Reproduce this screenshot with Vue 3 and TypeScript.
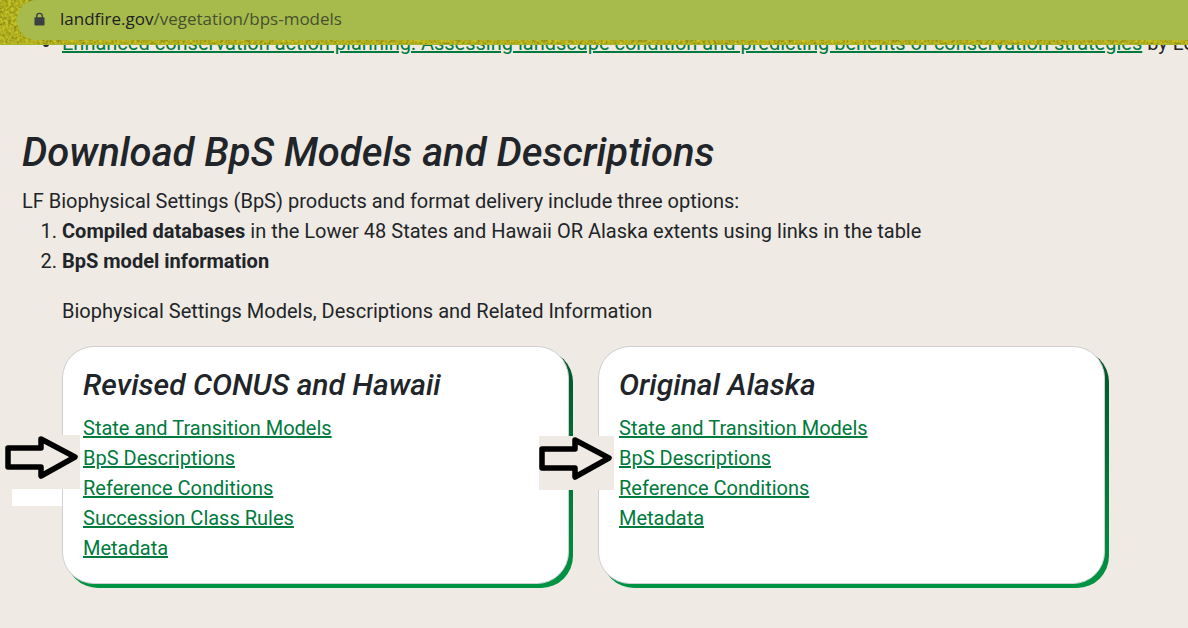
<script setup lang="ts">
interface Card {
  title: string
  links: string[]
}

const cards: Card[] = [
  {
    title: 'Revised CONUS and Hawaii',
    links: [
      'State and Transition Models',
      'BpS Descriptions',
      'Reference Conditions',
      'Succession Class Rules',
      'Metadata',
    ],
  },
  {
    title: 'Original Alaska',
    links: ['State and Transition Models', 'BpS Descriptions', 'Reference Conditions', 'Metadata'],
  },
]
</script>

<template>
  <div class="page">
    <header class="browser-bar">
      <svg class="texture" aria-hidden="true">
        <filter id="grain" x="0" y="0" width="100%" height="100%">
          <feTurbulence type="fractalNoise" baseFrequency="0.35" numOctaves="3" seed="4" />
          <feColorMatrix
            type="matrix"
            values="0.7 0 0 0 0.31  0.7 0 0 0 0.3  0.2 0 0 0 0  0 0 0 0 1"
            color-interpolation-filters="sRGB"
          />
        </filter>
        <rect width="100%" height="100%" filter="url(#grain)" />
      </svg>
      <div class="address">
        <svg class="lock" viewBox="0 0 12 14" aria-hidden="true">
          <path d="M3 6V3.8a3 3 0 0 1 6 0V6" fill="none" stroke="#3c4043" stroke-width="1.5" />
          <rect x="0.5" y="5" width="11" height="9" rx="1" fill="#3c4043" />
        </svg>
        <span class="url"><span class="host">landfire.gov</span>/vegetation/bps-models</span>
      </div>
    </header>

    <main>
      <ul class="papers">
        <li>
          <a href="#">Enhanced conservation action planning: Assessing landscape condition and predicting benefits of conservation strategies</a>
          by Lo
        </li>
      </ul>

      <h2>Download BpS Models and Descriptions</h2>
      <p>LF Biophysical Settings (BpS) products and format delivery include three options:</p>
      <ol>
        <li>
          <strong>Compiled databases</strong> in the Lower 48 States and Hawaii OR Alaska extents using links in the table
        </li>
        <li>
          <strong>BpS model information</strong>
          <p class="intro">Biophysical Settings Models, Descriptions and Related Information</p>
          <div class="cards">
            <section v-for="(card, i) in cards" :key="card.title" class="card-shell">
              <div class="card">
                <h3>{{ card.title }}</h3>
                <a v-for="link in card.links" :key="link" href="#">{{ link }}</a>
              </div>
              <span v-if="i === 0" class="strip"></span>
              <span class="pointer" :class="{ first: i === 0 }">
                <svg viewBox="0 0 75 54" aria-hidden="true">
                  <path
                    d="M3 13H36V4L70 22L36 41V32H3Z"
                    fill="none"
                    stroke="#000"
                    stroke-width="5.500"
                    stroke-linejoin="round"
                  />
                </svg>
              </span>
            </section>
          </div>
        </li>
      </ol>
    </main>
  </div>
</template>

<style>
body {
  background: #efeae3;
}
</style>

<style scoped>
.page {
  min-height: 100vh;
  overflow: hidden;
  background: #efeae3;
  color: #212529;
  font: 20px/30px Roboto, sans-serif;
}

.browser-bar {
  position: relative;
  z-index: 1;
  height: 45px;
  border-bottom: 1px solid #a8b52c;
  box-sizing: border-box;
  background: #a5a51c;
  overflow: hidden;
}

.texture {
  position: absolute;
  inset: 0;
  width: 100%;
  height: 100%;
  filter: brightness(0.84);
}

.address {
  position: relative;
  display: flex;
  align-items: center;
  gap: 15px;
  height: 40px;
  box-sizing: border-box;
  margin-left: 17px;
  padding: 0 17px 2px;
  border-radius: 20px 0 0 20px;
  background: #a7bb4d;
}

.lock {
  width: 11px;
  height: 14px;
}

.url {
  font: 17px/24px "Open Sans", sans-serif;
  color: #46502f;
}

.host {
  color: #202124;
}

main {
  padding: 0 22px;
}

ul,
ol {
  margin: 0;
  padding-left: 40px;
}

.papers {
  margin-top: -17px;
  white-space: nowrap;
}

a {
  color: #007a3d;
  text-decoration-thickness: 2px;
}

h2,
h3 {
  margin: 0;
  font-style: italic;
  font-weight: 500;
}

h2 {
  margin: 71px 0 9px;
  font-size: 40px;
  line-height: 48px;
}

h3 {
  margin-bottom: 9px;
  font-size: 30px;
  line-height: 38px;
}

p {
  margin: 0;
}

.intro {
  margin: 20px 0;
}

.cards {
  display: grid;
  grid-template-columns: 1fr 1fr;
  gap: 29px;
  margin-right: 61px;
}

.card-shell {
  position: relative;
  display: flex;
  margin-bottom: 4px;
}

.card-shell::before {
  content: "";
  position: absolute;
  inset: 4px -4px -4px 4px;
  border-radius: 32px;
  background: linear-gradient(#00552b, #009444);
}

.card {
  position: relative;
  flex: 1;
  display: flex;
  flex-direction: column;
  align-items: flex-start;
  padding: 19px 20px 20px;
  border: 1px solid #ced0d2;
  border-radius: 32px;
  background: #fff;
}

.pointer {
  position: absolute;
  top: 90px;
  left: -59px;
  width: 75px;
  height: 54px;
  background: #efeae3;
}

.pointer.first {
  left: -57px;
  top: 89px;
}

.pointer svg {
  display: block;
  width: 75px;
  height: 54px;
}

.strip {
  position: absolute;
  top: 143px;
  left: -50px;
  width: 50px;
  height: 17px;
  background: #fff;
}
</style>
